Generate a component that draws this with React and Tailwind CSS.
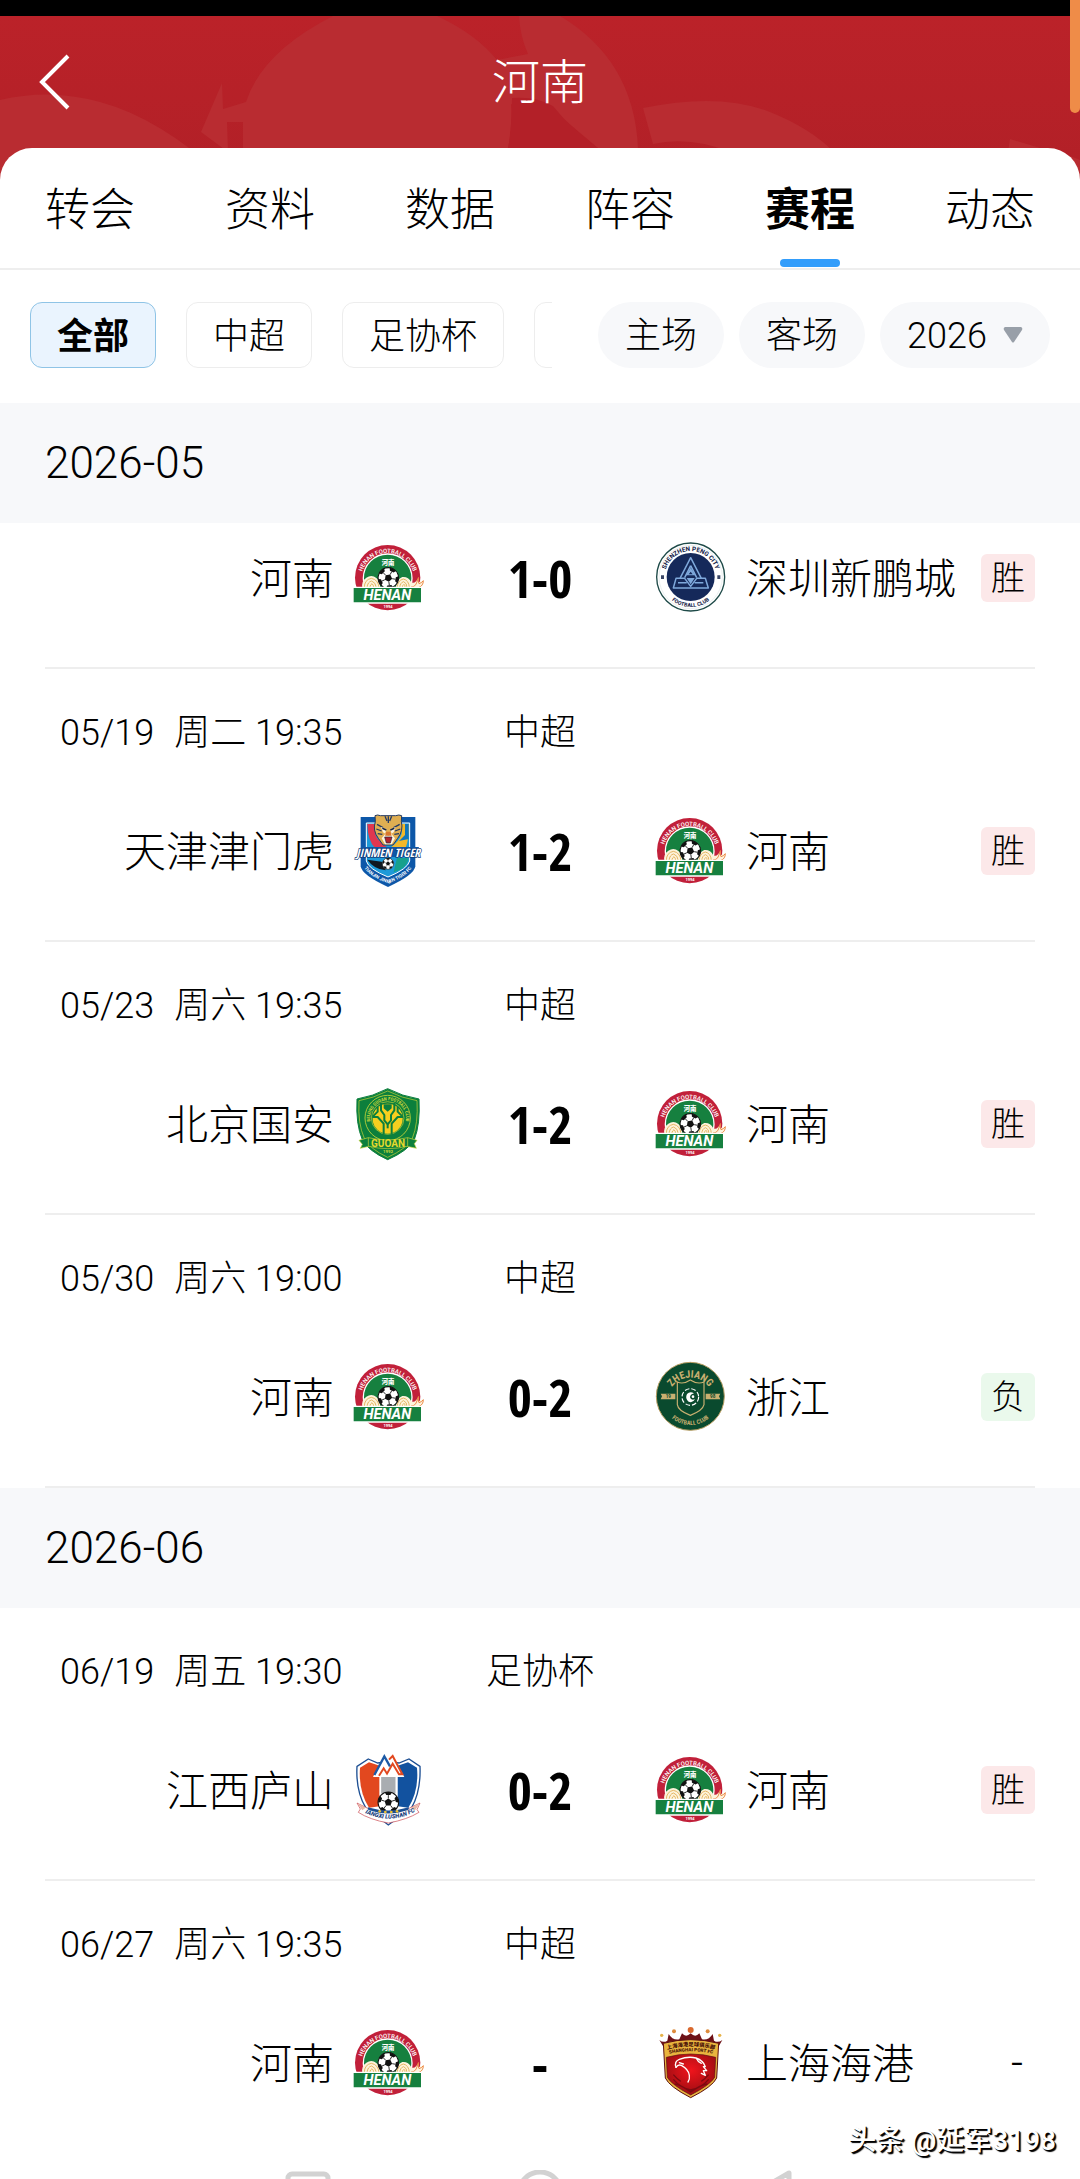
import React, { useId, useState } from "react";

const TABS = ["转会", "资料", "数据", "阵容", "赛程", "动态"];
const LEAGUES = ["全部", "中超", "足协杯"];
const VENUES = ["主场", "客场"];

const MONTHS = [
  {
    month: "2026-05",
    matches: [
      { home: "河南", away: "深圳新鹏城", score: "1-0", result: "胜" },
      { date: "05/19", time: "周二 19:35", league: "中超", home: "天津津门虎", away: "河南", score: "1-2", result: "胜" },
      { date: "05/23", time: "周六 19:35", league: "中超", home: "北京国安", away: "河南", score: "1-2", result: "胜" },
      { date: "05/30", time: "周六 19:00", league: "中超", home: "河南", away: "浙江", score: "0-2", result: "负" },
    ],
  },
  {
    month: "2026-06",
    matches: [
      { date: "06/19", time: "周五 19:30", league: "足协杯", home: "江西庐山", away: "河南", score: "0-2", result: "胜" },
      { date: "06/27", time: "周六 19:35", league: "中超", home: "河南", away: "上海海港", score: "-", result: "-" },
    ],
  },
];

const Ball = ({ cx, cy, r, tilt = 0 }) => (
  <g transform={`translate(${cx} ${cy}) rotate(${tilt}) scale(${r / 10})`}>
    <circle r="10" fill="#fff" stroke="#111" strokeWidth="1" />
    <path d="M0-3.8 3.6-1.2 2.2 3H-2.2L-3.6-1.2Z" fill="#111" />
    {[0, 72, 144, 216, 288].map((deg) => (
      <g key={deg} transform={`rotate(${deg})`}>
        <path d="M-3.4-9.4Q0-10.6 3.4-9.4L2-7H-2Z" fill="#111" />
        <path d="M0-7V-3.8" stroke="#111" strokeWidth=".8" />
      </g>
    ))}
  </g>
);

const HenanLogo = () => {
  const id = useId();
  return (
    <svg viewBox="41 36 210 210" className="size-[70px] shrink-0 overflow-visible" aria-hidden="true">
      <defs>
        <path id={id} d="M62 146A80 80 0 0 1 222 146" />
      </defs>
      <circle cx="142" cy="140" r="98" fill="#c1203a" />
      <circle cx="142" cy="142" r="73" fill="#16803f" stroke="#fff" strokeWidth="4" />
      <text fill="#fff" textAnchor="middle" className="font-['Roboto'] text-[18px] font-medium">
        <textPath href={`#${id}`} startOffset="50%">HENAN FOOTBALL CLUB</textPath>
      </text>
      <text x="143" y="101" fill="#fff" textAnchor="middle" className="font-['Noto_Sans_CJK_SC'] text-[19px] font-black">河南</text>
      <path d="M66 172Q62 150 78 140Q94 130 108 141Q118 148 120 172ZM166 172Q168 144 186 138Q204 136 212 152Q218 160 228 150L236 138 234 154 250 148Q250 166 236 172Z" fill="#fdf3dc" />
      <g fill="none" stroke="#e0a94a" strokeWidth="2.5">
        <path d="M72 170Q72 146 93 142Q114 146 116 170M80 170Q82 152 94 150Q106 154 108 170M88 170Q90 160 95 158Q100 162 100 170" />
        <path d="M170 170Q172 148 189 144Q206 148 207 170M178 170Q180 154 190 152Q200 156 200 170M185 170Q187 162 191 160Q195 163 194 170" />
        <path d="M212 168Q226 168 230 152L234 140Q232 152 236 158Q244 156 249 149Q249 164 236 169" stroke="#e8772e" />
      </g>
      <Ball cx={144} cy={141} r={31} tilt={28} />
      <path d="M38 169H244V216H38Z" fill="#16803f" stroke="#fff" strokeWidth="4" />
      <text x="141" y="207" fill="#fff" textAnchor="middle" className="font-['Roboto'] text-[44px] font-bold italic">HENAN</text>
      <text x="143" y="230" fill="#fff" textAnchor="middle" className="font-['Roboto'] text-[12px] font-bold">1994</text>
    </svg>
  );
};

const ShenzhenLogo = () => {
  const id = useId();
  return (
    <svg viewBox="948 36 210 210" className="size-[70px] shrink-0 overflow-visible" aria-hidden="true">
      <defs>
        <path id={`${id}t`} d="M974 138A78 78 0 0 1 1130 138" />
        <path id={`${id}b`} d="M962 138A90 90 0 0 0 1142 138" />
      </defs>
      <circle cx="1052" cy="138" r="102" fill="#fff" stroke="#1e4a48" strokeWidth="4" />
      <circle cx="1052" cy="138" r="95" fill="none" stroke="#dfe8e8" strokeWidth="2" />
      <circle cx="1052" cy="138" r="72" fill="#15295a" />
      <g fill="#1c2a4e" textAnchor="middle" className="font-['Roboto'] font-extrabold">
        <text className="text-[19px]"><textPath href={`#${id}t`} startOffset="50%">SHENZHEN PENG CITY</textPath></text>
        <text className="text-[16px]"><textPath href={`#${id}b`} startOffset="50%">FOOTBALL CLUB</textPath></text>
      </g>
      <path d="M963 133h9v11h-9zM1132 133h9v11h-9z" fill="#3b4766" />
      <g fill="none" stroke="#7fa9dc" strokeWidth="4.5" strokeLinejoin="round">
        <path d="M1052 80 1020 142H1008L1000 171H1105L1096 142H1084Z" />
        <path d="M1020 142H1034L1052 166 1070 142H1084M1014 155H1040M1064 155H1090" />
        <path d="M1052 104 1034 140M1052 104 1070 140" />
      </g>
      <path d="M1052 110 1066 133H1038ZM1052 160 1040 141H1064Z" fill="#7fa9dc" />
      <path d="M1052 122 1058 130H1046Z" fill="#15295a" />
    </svg>
  );
};

const TianjinLogo = () => {
  const id = useId();
  return (
    <svg viewBox="41 45 210 210" className="size-[70px] shrink-0 overflow-visible" aria-hidden="true">
      <defs>
        <path id={id} d="M66 186Q74 222 143 247Q212 222 220 186" />
      </defs>
      <path d="M61 48H225V196Q222 222 143 258Q64 222 61 196Z" fill="#0d57a8" />
      <path d="M78 66H208V180Q202 204 143 228Q84 204 78 180Z" fill="#1d9ad8" stroke="#fff" strokeWidth="3" />
      <path d="M81 69H104V98Q112 122 143 140H104Q82 120 81 69Z" fill="#e0364f" />
      <path d="M205 69H184V98Q176 122 150 140H196Q206 116 205 69Z" fill="#f2b82a" />
      <path d="M205 69H194V102L176 120 205 114Z" fill="#0f75bc" />
      <path d="M81 176 124 182 136 208Q100 204 81 176Z" fill="#101820" />
      <path d="M205 172 170 170 160 214Q200 204 205 172Z" fill="#17a08c" />
      <path d="M104 44Q112 40 120 44H166Q176 40 184 44L183 62Q190 88 172 112L158 132H128L114 112Q96 88 105 62Z" fill="#dfae52" stroke="#243a63" strokeWidth="3" />
      <path d="M110 70 128 80M108 84 124 90M112 98 126 100M178 70 160 80M180 84 164 90M176 98 162 100M134 46 140 60M154 46 148 60M144 46V66" stroke="#243a63" strokeWidth="4" />
      <path d="M122 78 138 84 134 100 124 112 134 130H154L164 112 154 100 150 84 166 78 160 94 144 104 128 94Z" fill="#fff4df" />
      <path d="M126 82 138 87M162 82 150 87" stroke="#18233f" strokeWidth="5" />
      <path d="M138 92H150L154 104H134Z" fill="#d9772f" />
      <path d="M133 108H155L150 126H138Z" fill="#b3242c" stroke="#18233f" strokeWidth="2" />
      <path d="M62 138H236L226 168H52Z" fill="#0d57a8" />
      <text x="144" y="167" fill="#fff" stroke="#123c78" strokeWidth="4" paintOrder="stroke" textAnchor="middle" className="font-['Open_Sans_Condensed','Roboto_Condensed'] text-[35px] font-bold italic">JINMEN TIGER</text>
      <Ball cx={143} cy={188} r={17} />
      <text fill="#fff" textAnchor="middle" className="font-['Roboto'] text-[14px] font-bold">
        <textPath href={`#${id}`} startOffset="50%">TIANJIN JINMEN TIGER FC</textPath>
      </text>
    </svg>
  );
};

const GuoanLogo = () => {
  const id = useId();
  return (
    <svg viewBox="41 54 210 210" className="size-[70px] shrink-0 overflow-visible" aria-hidden="true">
      <defs>
        <path id={id} d="M98 172A54 54 0 1 1 188 172" />
      </defs>
      <path d="M142 53Q186 76 236 84Q240 160 222 206Q202 240 142 266Q84 240 66 206Q46 160 50 84Q98 76 142 53Z" fill="#0c7f3c" stroke="#0c7f3c" strokeWidth="3" />
      <path d="M142 60Q186 82 230 89Q234 158 216 202Q198 234 142 259Q88 234 72 202Q52 158 56 89Q98 82 142 60Z" fill="none" stroke="#c8d63a" strokeWidth="2" />
      <circle cx="142" cy="141" r="68" fill="none" stroke="#c8d63a" strokeWidth="2.5" />
      <text fill="#c8d63a" textAnchor="middle" className="font-['Roboto_Condensed'] text-[14px] font-bold">
        <textPath href={`#${id}`} startOffset="50%">BEIJING GUOAN FOOTBALL CLUB</textPath>
      </text>
      <circle cx="142" cy="141" r="49" fill="#0c7f3c" stroke="#c8d63a" strokeWidth="2" />
      <circle cx="142" cy="143" r="45" fill="#f6cf1f" />
      <g fill="none" stroke="#0c7f3c" strokeWidth="6" strokeLinejoin="round">
        <path d="M122 96V118L132 132 132 148 142 160 152 148V132L162 118V96" />
        <path d="M96 138H112L130 158V190M188 138H172L154 158V190" />
        <path d="M112 108V122L98 136M172 108V122L186 136" />
        <path d="M142 160V172" />
      </g>
      <path d="M130 100H154V112L142 122 130 112Z" fill="#0c7f3c" />
      <path d="M56 208 84 200Q142 214 202 200L230 208 222 218 228 232 200 226Q142 240 86 226L60 232 66 220Z" fill="#0c7f3c" stroke="#c8d63a" strokeWidth="2" />
      <path d="M84 200V226M202 200V226" stroke="#c8d63a" strokeWidth="2" />
      <text x="143" y="228" fill="#e6d92c" textAnchor="middle" className="font-['Roboto'] text-[30px] font-bold">GUOAN</text>
      <text x="143" y="247" fill="#c8d63a" textAnchor="middle" className="font-['Roboto'] text-[13px] font-bold">1992</text>
    </svg>
  );
};

const ZhejiangLogo = () => {
  const id = useId();
  return (
    <svg viewBox="948 48 210 210" className="size-[70px] shrink-0 overflow-visible" aria-hidden="true">
      <defs>
        <path id={`${id}t`} d="M984 151A68 68 0 0 1 1118 151" />
        <path id={`${id}b`} d="M965 151A86 86 0 0 0 1137 151" />
      </defs>
      <circle cx="1051" cy="151" r="102" fill="#0a4a2e" stroke="#b79d62" strokeWidth="3" />
      <g fill="#c9b071" textAnchor="middle" className="font-['Roboto_Condensed'] font-bold">
        <text className="text-[31px]"><textPath href={`#${id}t`} startOffset="50%">ZHEJIANG</textPath></text>
        <text className="text-[18px]"><textPath href={`#${id}b`} startOffset="50%">FOOTBALL CLUB</textPath></text>
      </g>
      <path d="M962 143H1006V160H962L966 151ZM1097 143H1141L1137 151 1141 160H1097Z" fill="#c9b071" />
      <text x="985" y="157" fill="#0a4a2e" textAnchor="middle" className="font-['Roboto'] text-[14px] font-bold">19</text>
      <text x="1118" y="157" fill="#0a4a2e" textAnchor="middle" className="font-['Roboto'] text-[14px] font-bold">98</text>
      <path d="M1012 108Q1030 116 1051 102Q1072 116 1092 108V176Q1088 194 1051 208Q1014 194 1012 176Z" fill="#0a4a2e" stroke="#c9b071" strokeWidth="3.5" />
      <circle cx="1051" cy="153" r="25" fill="none" stroke="#fff" strokeWidth="3.5" strokeDasharray="14 6" />
      <path d="M1062 142Q1050 134 1041 144Q1034 158 1046 167Q1058 172 1065 160Q1052 164 1050 154Q1050 145 1062 142Z" fill="#fff" />
      <circle cx="1059" cy="152" r="4" fill="#fff" />
    </svg>
  );
};

const LushanLogo = () => {
  const id = useId();
  return (
    <svg viewBox="41 42 210 210" className="size-[70px] shrink-0 overflow-visible" aria-hidden="true">
      <defs>
        <path id={id} d="M70 214Q144 252 220 214" />
      </defs>
      <path d="M84 54 112 66 144 62 176 66 206 54 239 76Q242 150 214 200L144 252 76 200Q46 150 50 76Z" fill="#fff" stroke="#1d4f93" strokeWidth="4" />
      <path d="M86 64 118 74V196L86 200Q54 150 59 80Z" fill="#e2481f" />
      <path d="M203 64 172 74V196L204 200Q236 150 230 80Z" fill="#12529f" />
      <path d="M120 104H168V160H120Z" fill="#a9adb1" stroke="#fff" strokeWidth="5" />
      <path d="M98 108 132 40 144 54 156 40 192 108Z" fill="#fff" />
      <path d="M102 102 132 46 149 76" fill="none" stroke="#1c5aa6" strokeWidth="7" />
      <path d="M146 56 157 45 186 100H176L157 68 140 98 130 82 116 104" fill="none" stroke="#e2481f" strokeWidth="6" />
      <Ball cx={144} cy={184} r={31} />
      <path d="M50 186 82 202Q144 222 206 202L239 186 230 206 236 214Q200 236 144 246Q88 236 54 214L60 204Z" fill="#fff" stroke="#c9434a" strokeWidth="2" />
      <path d="M82 199Q144 218 206 199L204 207Q144 228 84 207Z" fill="#1d4f93" />
      <path d="M52 188 76 200 66 208ZM238 188 212 200 224 208Z" fill="#e9b8a6" />
      <text fill="#1d4380" textAnchor="middle" className="font-['Roboto'] text-[18px] font-black italic">
        <textPath href={`#${id}`} startOffset="50%">JIANGXI LUSHAN FC</textPath>
      </text>
      <g fill="#f2c230">
        <circle cx="118" cy="211" r="4" />
        <circle cx="135" cy="213" r="4" />
        <circle cx="153" cy="213" r="4" />
        <circle cx="170" cy="211" r="4" />
      </g>
    </svg>
  );
};

const ShanghaiLogo = () => {
  const id = useId();
  return (
    <svg viewBox="948 36 210 210" className="size-[70px] shrink-0 overflow-visible" aria-hidden="true">
      <defs>
        <path id={`${id}a`} d="M974 103Q1052 78 1132 103" />
        <path id={`${id}b`} d="M976 116Q1052 96 1130 116" />
        <radialGradient id={`${id}r`} cx="50%" cy="40%" r="60%">
          <stop offset="0" stopColor="#f0141c" />
          <stop offset="1" stopColor="#9c0d12" />
        </radialGradient>
      </defs>
      <circle cx="1052" cy="42" r="9" fill="#d9682e" />
      <circle cx="1002" cy="46" r="6" fill="#dd8b3c" />
      <circle cx="1103" cy="46" r="6" fill="#dd8b3c" />
      <circle cx="965" cy="58" r="5" fill="#e6b34a" />
      <circle cx="1139" cy="58" r="5" fill="#e6b34a" />
      <path d="M958 72Q970 82 982 74L986 54Q998 74 1018 70L1026 52Q1038 66 1052 52Q1066 66 1078 52L1086 70Q1106 74 1118 54L1122 74Q1134 82 1147 72L1132 98H974Z" fill="#6d1016" />
      <path d="M970 82Q1052 60 1136 82L1130 186Q1118 212 1052 245Q988 212 976 186Z" fill="#e9b43e" stroke="#5c0f12" strokeWidth="3" />
      <path d="M979 124Q1052 104 1127 124L1124 184Q1112 206 1052 237Q994 206 982 184Z" fill={`url(#${id}r)`} stroke="#5c0f12" strokeWidth="2" />
      <g fill="#4a1208" textAnchor="middle">
        <text className="font-['Noto_Sans_CJK_SC'] text-[16px] font-black"><textPath href={`#${id}a`} startOffset="50%">上海海港足球俱乐部</textPath></text>
        <text className="font-['Roboto'] text-[14px] font-black"><textPath href={`#${id}b`} startOffset="50%">SHANGHAI PORT FC</textPath></text>
      </g>
      <path d="M1000 190Q1020 214 1052 222Q1086 214 1106 190M1004 204Q1022 206 1052 228Q1084 206 1102 204M1000 176Q1012 190 1022 196M1106 176Q1094 190 1084 196" fill="none" stroke="#7d0a10" strokeWidth="4" />
      <g fill="none" stroke="#fff" strokeWidth="4" strokeLinecap="round" strokeLinejoin="round">
        <path d="M1008 154Q1002 136 1018 130Q1044 120 1068 126Q1090 134 1096 152L1090 152 1100 164 1090 164 1096 178 1084 172" />
        <path d="M1008 154Q1014 144 1024 148Q1046 160 1048 178Q1050 190 1044 198" />
        <path d="M1018 140 1030 144M1070 128Q1074 138 1084 142" />
      </g>
    </svg>
  );
};

const LOGOS = {
  河南: HenanLogo,
  深圳新鹏城: ShenzhenLogo,
  天津津门虎: TianjinLogo,
  北京国安: GuoanLogo,
  浙江: ZhejiangLogo,
  江西庐山: LushanLogo,
  上海海港: ShanghaiLogo,
};

const ResultBadge = ({ result }) => {
  if (result === "-") return <span className="ml-auto pr-3">-</span>;
  return (
    <span
      className={`ml-auto rounded-md px-[10px] text-[34px] leading-[48px] ${
        result === "胜" ? "bg-[#fce8e9]" : "bg-[#eaf9ec]"
      }`}
    >
      {result}
    </span>
  );
};

const MatchRow = ({ match, last }) => {
  const HomeLogo = LOGOS[match.home];
  const AwayLogo = LOGOS[match.away];
  return (
    <li className={`mx-[45px] pb-[54px] ${last ? "" : "border-b-2 border-[#eeeeee]"}`}>
      {match.date ? (
        <div className="grid grid-cols-[1fr_232px_1fr] pt-10 pb-[59px] text-[36px] leading-[48px]">
          <p className="flex gap-5 pl-[15px]">
            <span>{match.date}</span>
            <span>{match.time}</span>
          </p>
          <p className="text-center">{match.league}</p>
        </div>
      ) : (
        <div className="h-5" />
      )}
      <div className="grid h-[70px] grid-cols-[1fr_232px_1fr] items-center text-[42px] leading-[48px] whitespace-nowrap">
        <div className="flex items-center justify-end gap-5">
          <span className="pt-1">{match.home}</span>
          <HomeLogo />
        </div>
        <b className="text-center font-['Open_Sans_Condensed','Roboto_Condensed',sans-serif] text-[52px] font-bold">
          {match.score}
        </b>
        <div className="flex items-center gap-5">
          <AwayLogo />
          <span className="pt-1">{match.away}</span>
          <ResultBadge result={match.result} />
        </div>
      </div>
    </li>
  );
};

const App = () => {
  const [tab, setTab] = useState("赛程");
  const [league, setLeague] = useState("全部");
  const [year, setYear] = useState("2026");

  return (
    <div className="relative overflow-hidden bg-white font-['Roboto','Noto_Sans_CJK_SC',sans-serif] font-light text-black">
      <div className="h-4 bg-black" />
      <div className="absolute top-0 right-0 z-10 h-[113px] w-[10px] rounded-b-full bg-[#ef8c48]" />

      <div className="relative bg-linear-to-b from-[#bb2229] to-[#b22027] to-60%">
        <svg className="absolute top-0 left-0 h-[162px] w-full" viewBox="0 16 1080 162" preserveAspectRatio="none" aria-hidden="true">
          <g fill="#b92c31">
            <path d="M0 100Q50 88 100 102Q160 118 225 178H0Z" />
            <path d="M222 83 201 132 228 152 227 122H243V148H508Q513 124 511 104L560 116 598 148H638Q634 60 560 16H519Q520 36 528 54L497 60Q476 34 437 16H333Q262 52 246 102L223 109Z" />
            <path d="M643 108Q720 92 770 112Q810 128 834 152H730Q690 136 653 144Z" />
            <path d="M1010 139 1040 148 1080 178V160L1060 152H1008Z" />
          </g>
          <path d="M512 98Q536 96 553 106Q572 130 600 150H508Q512 124 512 98Z" fill="#b32028" />
        </svg>
        <header className="relative grid h-[132px] grid-cols-[1fr_auto_1fr] items-center px-9 text-white">
          <button type="button" aria-label="返回" className="justify-self-start">
            <svg width="38" height="56" viewBox="0 0 38 56" fill="none" stroke="currentColor" strokeWidth="4">
              <path d="M32 2 6 28 32 54" />
            </svg>
          </button>
          <h1 className="pt-0.5 text-[48px] leading-[60px]">河南</h1>
        </header>

        <nav className="relative grid grid-cols-6 rounded-t-[32px] border-b-2 border-[#eeeeee] bg-white pt-[33px] pb-px">
          {TABS.map((name) => (
            <button
              key={name}
              type="button"
              onClick={() => setTab(name)}
              className={`flex flex-col items-center gap-[18px] text-[45px] leading-[60px] ${tab === name ? "font-bold" : ""}`}
            >
              {name}
              <span className={`h-2 w-[60px] rounded-full ${tab === name ? "bg-[#329dfb]" : ""}`} />
            </button>
          ))}
        </nav>
      </div>

      <div className="flex px-[30px] pt-8 pb-[35px] text-[36px] leading-[60px]">
        <div className="flex min-w-0 flex-1 gap-[30px] overflow-hidden">
          {LEAGUES.map((name) => (
            <button
              key={name}
              type="button"
              onClick={() => setLeague(name)}
              className={`shrink-0 rounded-xl border px-[26px] pt-1 ${
                league === name ? "border-[#8fc4e6] bg-[#eaf4fe] font-bold" : "border-[#ededed]"
              }`}
            >
              {name}
            </button>
          ))}
          <button type="button" aria-label="更多" className="w-31 shrink-0 rounded-xl border border-[#ededed]" />
        </div>
        <div className="ml-[46px] flex shrink-0 gap-[15px]">
          {VENUES.map((name) => (
            <button key={name} type="button" className="rounded-full bg-[#f7f8fa] px-[27px] pt-1 pb-0.5 leading-[60px]">
              {name}
            </button>
          ))}
          <label className="flex items-center gap-4 rounded-full bg-[#f7f8fa] px-[27px]">
            <select
              aria-label="赛季"
              value={year}
              onChange={(e) => setYear(e.target.value)}
              className="appearance-none bg-transparent pt-0.5"
            >
              <option>2026</option>
            </select>
            <svg width="20" height="16" viewBox="0 0 20 16" aria-hidden="true">
              <path d="M2 0H18Q20 1 19 3L11 15Q10 16 9 15L1 3Q0 1 2 0Z" fill="#989fa8" />
            </svg>
          </label>
        </div>
      </div>

      {MONTHS.map((group, i) => (
        <section key={group.month}>
          <h2 className="bg-[#f7f8fa] px-[45px] text-[44px] leading-[120px]">{group.month}</h2>
          <ul>
            {group.matches.map((match, j) => (
              <MatchRow
                key={j}
                match={match}
                last={i === MONTHS.length - 1 && j === group.matches.length - 1}
              />
            ))}
          </ul>
        </section>
      ))}

      <footer className="grid h-[27px] grid-cols-[1fr_auto_1fr] gap-[186px] overflow-hidden pt-[18px]">
        <svg width="46" height="46" viewBox="0 0 46 46" fill="none" stroke="#d2d2d2" strokeWidth="5" className="justify-self-end" aria-hidden="true">
          <rect x="3" y="4" width="40" height="40" rx="4" />
        </svg>
        <svg width="46" height="46" viewBox="0 0 46 46" fill="none" stroke="#d2d2d2" strokeWidth="5" aria-hidden="true">
          <circle cx="23" cy="23" r="21" />
        </svg>
        <svg width="46" height="46" viewBox="0 0 46 46" fill="none" stroke="#d2d2d2" strokeWidth="5" strokeLinejoin="round" aria-hidden="true">
          <path d="M40 3V43L5 23Z" />
        </svg>
      </footer>
      <p className="absolute right-6 bottom-5 text-[28px] leading-[36px] font-medium text-white [text-shadow:2px_2px_1px_#000,1px_1px_0_#000]">
        头条 @延军3198
      </p>
    </div>
  );
};

export default App;
